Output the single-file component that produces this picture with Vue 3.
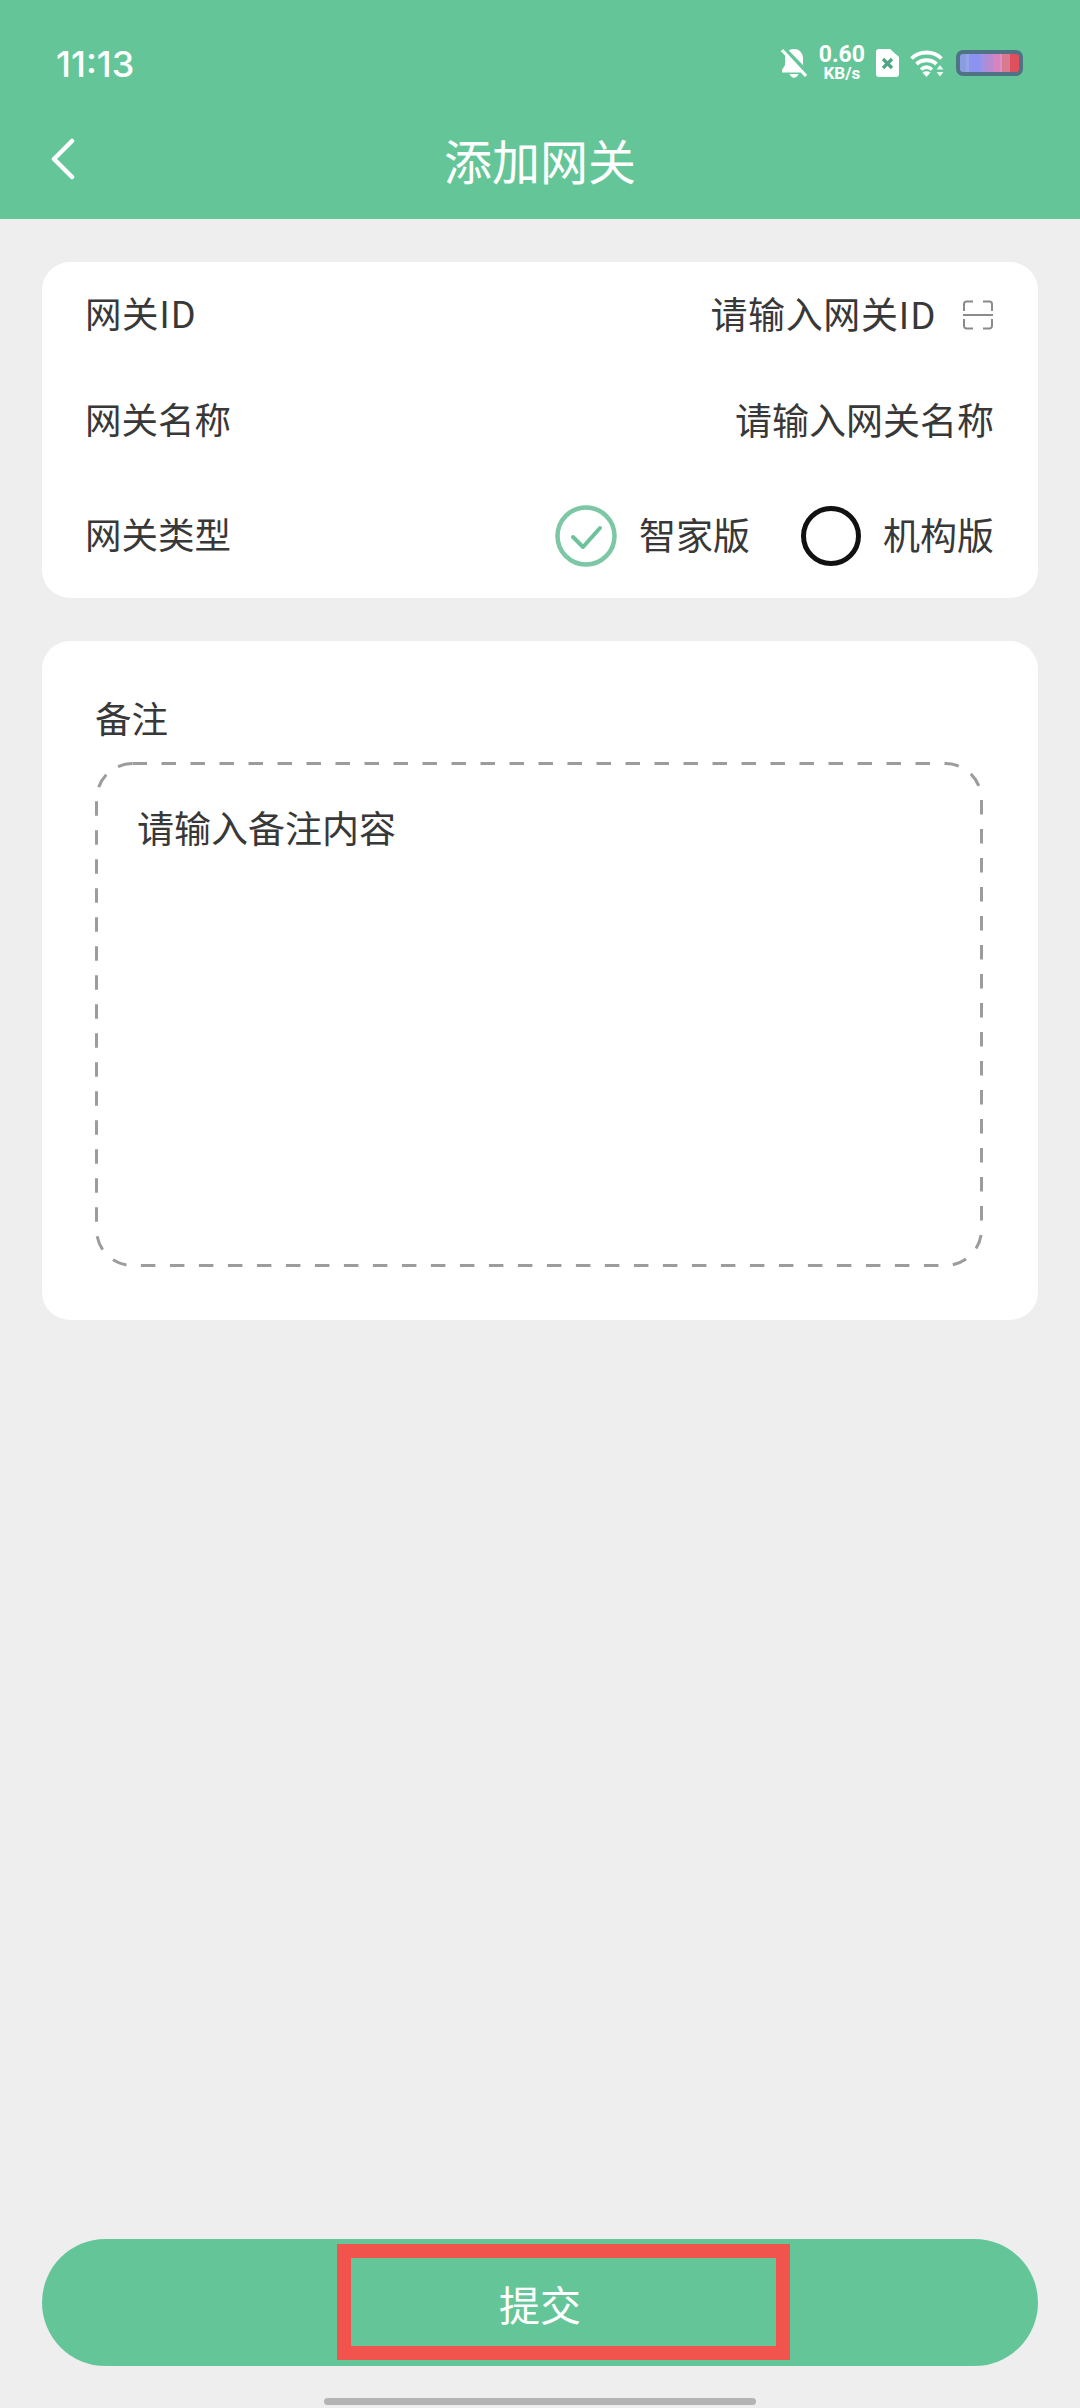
<template>
  <div class="page">
    <header class="header">
      <div class="status-bar">
        <span class="time">11:13</span>
        <div class="status-icons">
          <svg class="bell" width="26" height="30" viewBox="0 0 26 30">
            <path d="M13 1C7 1 4 5.500 4 11v6l-3 5v2.500h24V22l-3-5v-6c0-5.500-3-10-9-10z" fill="#fff" />
            <path d="M8.500 26c1 2.500 2.800 3.800 4.500 3.800s3.500-1.300 4.500-3.800z" fill="#fff" />
            <path d="M1 -1l27 28" stroke="#64c698" stroke-width="5" />
            <path d="M1 2l24 26" stroke="#fff" stroke-width="3" />
          </svg>
          <div class="speed">
            <span class="speed-num">0.60</span>
            <span class="speed-unit">KB/s</span>
          </div>
          <svg class="sim" width="23" height="28" viewBox="0 0 23 28">
            <path d="M3 0h11l9 8v17a3 3 0 0 1-3 3H3a3 3 0 0 1-3-3V3a3 3 0 0 1 3-3z" fill="#fff" />
            <path d="M7 10l9 9M16 10l-9 9" stroke="#4fa583" stroke-width="3.200" />
          </svg>
          <svg class="wifi" width="35" height="28" viewBox="0 0 35 28">
            <path d="M1.500 9.500C9.500 1.500 23.500 1.500 31.500 9.500" fill="none" stroke="#fff" stroke-width="3.800" />
            <path d="M6.500 15C12 10 21 10 26.500 15" fill="none" stroke="#fff" stroke-width="3.800" />
            <path d="M11 20.500c3.500-3 7.500-3 11 0" fill="none" stroke="#fff" stroke-width="3.500" />
            <path d="M16.500 28l-4-4.500c2.500-1.800 5.500-1.800 8 0z" fill="#fff" />
            <path d="M30 16l3.500 4.500h-7zM30 27.500l-3.500-4.500h7z" fill="#fff" fill-opacity="0.85" />
          </svg>
          <div class="battery"></div>
        </div>
      </div>
      <div class="nav">
        <svg class="back" width="26" height="42" viewBox="0 0 26 42">
          <path d="M22 3L4 21l18 18" fill="none" stroke="#fff" stroke-width="4.500" stroke-linecap="round" stroke-linejoin="round" />
        </svg>
        <h1 class="title">添加网关</h1>
      </div>
    </header>

    <main class="content">
      <section class="card form-card">
        <div class="row row-id">
          <span class="txt id-txt">网关ID</span>
          <div class="row-value">
            <span class="txt val id-txt">请输入网关ID</span>
            <svg width="32" height="30" viewBox="0 0 32 30">
              <path d="M2 11V4a2.500 2.500 0 0 1 2.500-2.500H11M21 1.500h6.500A2.500 2.500 0 0 1 30 4v7M2 19v7a2.500 2.500 0 0 0 2.500 2.500H11M21 28.500h6.500A2.500 2.500 0 0 0 30 26v-7" fill="none" stroke="#8a8a8a" stroke-width="2" />
              <path d="M1 15h30" stroke="#8a8a8a" stroke-width="2" />
            </svg>
          </div>
        </div>
        <div class="row row-name">
          <span class="txt">网关名称</span>
          <span class="txt val">请输入网关名称</span>
        </div>
        <div class="row row-type">
          <span class="txt">网关类型</span>
          <div class="options">
            <label v-for="opt in types" :key="opt.name" class="option">
              <svg v-if="opt.checked" width="62" height="62" viewBox="0 0 62 62">
                <circle cx="31" cy="31" r="28.500" fill="none" stroke="#7cc8a4" stroke-width="4.500" />
                <path d="M18 32l10 10 17-19" fill="none" stroke="#6cc29a" stroke-width="4" stroke-linecap="round" stroke-linejoin="round" />
              </svg>
              <span v-else class="radio-off"></span>
              <span class="txt val">{{ opt.name }}</span>
            </label>
          </div>
        </div>
      </section>

      <section class="card remark-card">
        <div class="remark-label">备注</div>
        <div class="remark-box">
          <svg class="dash" width="888" height="505" viewBox="0 0 888 505">
            <rect x="1.500" y="1.500" width="885" height="502" rx="36" fill="none" stroke="#9c9c9c" stroke-width="3" stroke-dasharray="14.500 14.500" />
          </svg>
          <span>请输入备注内容</span>
        </div>
      </section>
    </main>

    <div class="submit-wrap">
      <button class="submit">
        <span>提交</span>
        <i class="mark"></i>
      </button>
    </div>
    <div class="home-bar"></div>
  </div>
</template>

<script setup>
const types = [
  { name: '智家版', checked: true },
  { name: '机构版', checked: false },
];
</script>

<style>
html,
body {
  margin: 0;
  background: #eeeeee;
}
</style>

<style scoped>
.page {
  display: flex;
  flex-direction: column;
  height: 2408px;
  overflow: hidden;
  background: #eeeeee;
  color: #383838;
  font-family: "Noto Sans CJK SC", "Noto Sans", sans-serif;
  font-size: 36.5px;
  line-height: 50px;
}

.header {
  height: 219px;
  background: #64c698;
  color: #fff;
}

.status-bar {
  display: flex;
  justify-content: space-between;
  align-items: center;
  height: 126px;
  padding: 0 57px 0 56px;
}

.time {
  margin-top: 2px;
  font-family: Inter, sans-serif;
  font-size: 36px;
  font-weight: 500;
}

.status-icons {
  display: flex;
  align-items: center;
}

.speed {
  display: flex;
  flex-direction: column;
  align-items: center;
  margin: 0 11px 0 12px;
  font-family: Roboto, sans-serif;
  font-weight: 700;
}

.speed-num {
  font-size: 23px;
  line-height: 21px;
}

.speed-unit {
  font-size: 17px;
  line-height: 17px;
}

.wifi {
  margin: 0 11px;
}

.battery {
  box-sizing: border-box;
  width: 67px;
  height: 26px;
  border: 4px solid #4f7385;
  border-radius: 7px;
  background: linear-gradient(90deg, #8a9de0 0 10%, #95a6e8 10% 16%, #8c92f0 16% 36%, #a88fdc 36% 48%, #b88ad0 48% 56%, #d882c0 56% 68%, #e090c0 68% 72%, #d87a90 72% 84%, #e0505c 84% 100%);
}

.nav {
  position: relative;
  display: flex;
  justify-content: center;
  align-items: center;
  height: 72px;
}

.back {
  position: absolute;
  left: 50px;
  top: 12px;
}

.title {
  margin: 0;
  padding-bottom: 5px;
  font-size: 48px;
  font-weight: 400;
  line-height: 67px;
}

.content {
  display: flex;
  flex-direction: column;
  gap: 43px;
  padding: 43px 42px 0;
}

.card {
  background: #fff;
  border-radius: 28px;
}

.form-card {
  padding: 0 44px 0 43px;
}

.row {
  display: flex;
  justify-content: space-between;
  align-items: center;
}

.txt {
  padding-bottom: 4px;
}

.val {
  font-size: 37px;
}

.id-txt {
  letter-spacing: 0.6px;
}

.row-id {
  height: 106px;
}

.row-name {
  height: 106px;
}

.row-type {
  height: 124px;
}

.row-value {
  display: flex;
  align-items: center;
  gap: 26px;
}

.options {
  display: flex;
  gap: 51px;
}

.option {
  display: flex;
  align-items: center;
  gap: 22px;
}

.radio-off {
  box-sizing: border-box;
  width: 60px;
  height: 60px;
  border: 5px solid #111;
  border-radius: 50%;
}

.remark-card {
  height: 679px;
  box-sizing: border-box;
  padding: 52px 55px 0 53px;
}

.remark-label {
  height: 69px;
}

.remark-box {
  position: relative;
  box-sizing: border-box;
  height: 505px;
  padding: 40px 42px;
  font-size: 37px;
}

.dash {
  position: absolute;
  left: 0;
  top: 0;
}

.submit-wrap {
  margin-top: auto;
  padding: 0 42px;
}

.submit {
  position: relative;
  display: block;
  width: 100%;
  height: 127px;
  border: none;
  border-radius: 64px / 64px;
  background: #64c698;
  color: #fff;
  font-family: inherit;
  font-size: 41px;
}

.mark {
  position: absolute;
  left: 295px;
  top: 5px;
  box-sizing: border-box;
  width: 453px;
  height: 116px;
  border: 14px solid #f0544c;
}

.home-bar {
  flex: none;
  width: 432px;
  height: 7px;
  margin: 32px auto 3px;
  border-radius: 4px;
  background: #b4b4b4;
}
</style>
